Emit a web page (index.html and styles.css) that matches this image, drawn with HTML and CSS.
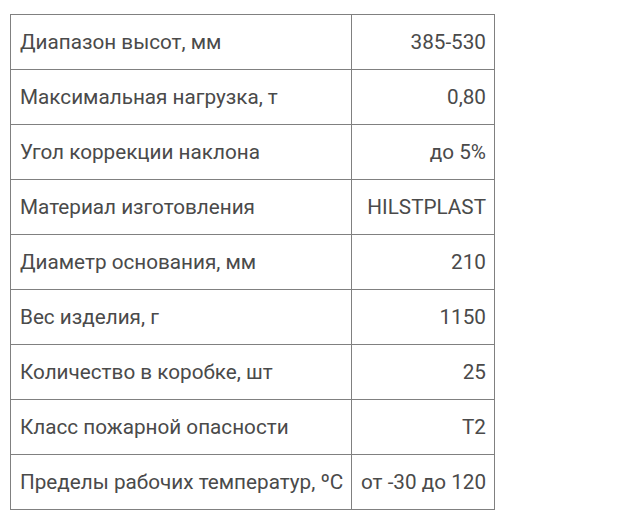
FILE: index.html
```html
<!DOCTYPE html>
<html lang="ru">
<head>
<meta charset="utf-8">
<link rel="stylesheet" href="styles.css">
</head>
<body>
<table class="specs">
  <colgroup><col class="c1"><col class="c2"></colgroup>
  <tr><td class="name">Диапазон высот, мм</td><td class="val">385-530</td></tr>
  <tr><td class="name">Максимальная нагрузка, т</td><td class="val">0,80</td></tr>
  <tr><td class="name">Угол коррекции наклона</td><td class="val">до 5%</td></tr>
  <tr><td class="name">Материал изготовления</td><td class="val">HILSTPLAST</td></tr>
  <tr><td class="name">Диаметр основания, мм</td><td class="val">210</td></tr>
  <tr><td class="name">Вес изделия, г</td><td class="val">1150</td></tr>
  <tr><td class="name">Количество в коробке, шт</td><td class="val">25</td></tr>
  <tr><td class="name">Класс пожарной опасности</td><td class="val">Т2</td></tr>
  <tr><td class="name">Пределы рабочих температур, ºС</td><td class="val">от -30 до 120</td></tr>
</table>
</body>
</html>
```
FILE: styles.css
```css
body {
  margin: 0;
  background: #fff;
  font-family: Roboto, "Liberation Sans", sans-serif;
  color: #4a4a4a;
}
.specs {
  margin: 14px 0 0 10px;
  border-collapse: collapse;
  table-layout: fixed;
  width: 484px;
  font-size: 20.7px;
}
.specs .c1 {
  width: 341px;
}
.specs .c2 {
  width: 143px;
}
.specs td {
  border: 1px solid #808080;
  height: 55px;
  padding: 0 8px 0 9px;
  box-sizing: border-box;
  vertical-align: middle;
  white-space: nowrap;
}
.specs .val {
  text-align: right;
  padding-right: 8px;
}
```
